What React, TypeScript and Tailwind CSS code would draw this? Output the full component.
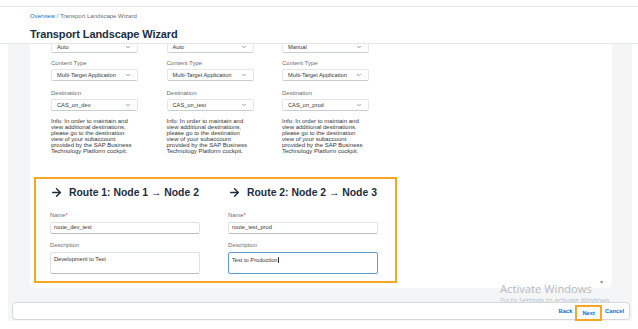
import { ArrowRight, ChevronDown } from "lucide-react";

const font = { fontFamily: '"Liberation Sans", Arial, sans-serif' };

type Col = {
  mode: string;
  dest: string;
};

const columns: Col[] = [
  { mode: "Auto", dest: "CAS_on_dev" },
  { mode: "Auto", dest: "CAS_on_test" },
  { mode: "Manual", dest: "CAS_on_prod" },
];

const Select = ({ value }: { value: string }) => (
  <div className="flex h-[12px] w-[87px] items-center justify-between rounded-[2px] border border-[#e4e6e8] border-b-[#c9ccd0] bg-white pl-[5px] pr-[6px] text-[5.7px] text-[#32363a]">
    <span>{value}</span>
    <ChevronDown className="h-[6px] w-[6px] text-[#556b82]" strokeWidth={2.5} />
  </div>
);

const Label = ({ children }: { children: React.ReactNode }) => (
  <div className="h-[7px] text-[6px] leading-[7px] text-[#6a6d70]">{children}</div>
);

const Route = ({
  from,
  to,
  n,
  name,
  desc,
  focused,
}: {
  from: number;
  to: number;
  n: number;
  name: string;
  desc: string;
  focused?: boolean;
}) => (
  <div className="flex w-[150px] flex-col">
    <div className="flex h-[16px] items-center text-[10.4px] font-bold text-[#1d2d3e]">
      <ArrowRight className="h-[13px] w-[13px] text-[#1d2d3e]" strokeWidth={2.6} />
      <span className="ml-[6px] whitespace-nowrap">
        Route {n}: Node {from} → Node {to}
      </span>
    </div>
    <div className="mt-[11.5px] h-[7px] text-[5.8px] leading-[7px] text-[#6a6d70]">
      Name<span className="text-[#e0357a]">*</span>
    </div>
    <div className="mt-[2.5px] flex h-[12px] items-center rounded-[2px] border border-[#dfe2e5] border-b-[#b9bec4] bg-white px-[3px] text-[5.7px] text-[#32363a]">
      {name}
    </div>
    <div className="mt-[8.5px] h-[7px] text-[5.8px] leading-[7px] text-[#6a6d70]">Description</div>
    <div
      className={`mt-[2.5px] h-[22px] rounded-[2px] bg-white px-[3px] pt-[3px] text-[5.7px] leading-[7px] text-[#32363a] ${
        focused ? "border-[1.5px] border-[#5b9bd9]" : "border border-[#dfe2e5] border-b-[#b9bec4]"
      }`}
    >
      {desc}
      {focused && <span className="ml-[0.5px] inline-block h-[6px] w-[0.6px] translate-y-[1px] bg-[#32363a]" />}
    </div>
  </div>
);

export default function App() {
  return (
    <div className="relative h-[329px] w-[638px] overflow-hidden bg-white" style={font}>
      {/* Header */}
      <div className="mt-[6px] flex h-[38px] flex-col border-y border-[#e5e6e8] bg-white pl-[30px]">
        <div className="mt-[5px] text-[6px] text-[#6a6d70]">
          <span className="text-[#0a6ed1]">Overview</span> / Transport Landscape Wizard
        </div>
        <div className="mt-[5px] text-[11px] font-extrabold tracking-[-0.1px] text-[#1d2d3e]">
          Transport Landscape Wizard
        </div>
      </div>

      {/* Body */}
      <div className="mx-[8px] flex h-[277px] w-[624px] flex-col bg-[#f4f5f6]">
        <div className="ml-[22px] mr-[20px] h-[244px] overflow-hidden rounded-b-[6px] bg-white">
          <div className="relative -mt-[3px] pl-[21px]">
            <div className="flex gap-[28.5px]">
              {columns.map((c) => (
                <div key={c.dest} className="flex w-[87px] flex-col">
                  <Select value={c.mode} />
                  <div className="mt-[7px]">
                    <Label>Content Type</Label>
                  </div>
                  <div className="mt-[2px]">
                    <Select value="Multi-Target Application" />
                  </div>
                  <div className="mt-[8.5px]">
                    <Label>Destination</Label>
                  </div>
                  <div className="mt-[2.5px]">
                    <Select value={c.dest} />
                  </div>
                  <p className="mt-[7px] whitespace-nowrap text-[6px] leading-[6.1px] text-[#32363a]">
                    Info: In order to maintain and
                    <br />
                    view additional destinations,
                    <br />
                    please go to the destination
                    <br />
                    view of your subaccount
                    <br />
                    provided by the SAP Business
                    <br />
                    Technology Platform cockpit.
                  </p>
                </div>
              ))}
            </div>

            {/* Routes */}
            <div className="-ml-[17px] mt-[22px] flex h-[106px] w-[363px] gap-[28px] border-2 border-[#f5a623] bg-white pl-[14px] pt-[6px]">
              <Route n={1} from={1} to={2} name="route_dev_test" desc="Development to Test" />
              <Route n={2} from={2} to={3} name="route_test_prod" desc="Test to Production" focused />
            </div>
          </div>
        </div>

        {/* Footer */}
        <div className="relative z-10 ml-[4px] mr-[2px] mt-[14px] flex h-[18px] items-center justify-end rounded-[4px] border border-[#d5d7da] bg-white pr-[5px] text-[5.8px] font-bold text-[#0a6ed1]">
          <span>Back</span>
          <span className="mx-[3px] flex h-[16px] translate-y-[2px] items-center border-2 border-[#f5a623] px-[5px]">
            Next
          </span>
          <span>Cancel</span>
        </div>
      </div>

      {/* scroll indicator */}
      <div className="absolute left-[600px] top-[279px] text-[6px] leading-none text-[#8a8d90]">▾</div>

      {/* Windows watermark */}
      <div
        className="pointer-events-none absolute left-[500px] top-[282px] text-[#b9bcbf]"
        style={{ fontFamily: '"Open Sans", "Liberation Sans", sans-serif' }}
      >
        <div className="text-[11.2px] leading-[14px]">Activate Windows</div>
        <div className="text-[6.8px] leading-[9px]">Go to Settings to activate Windows.</div>
      </div>
    </div>
  );
}
